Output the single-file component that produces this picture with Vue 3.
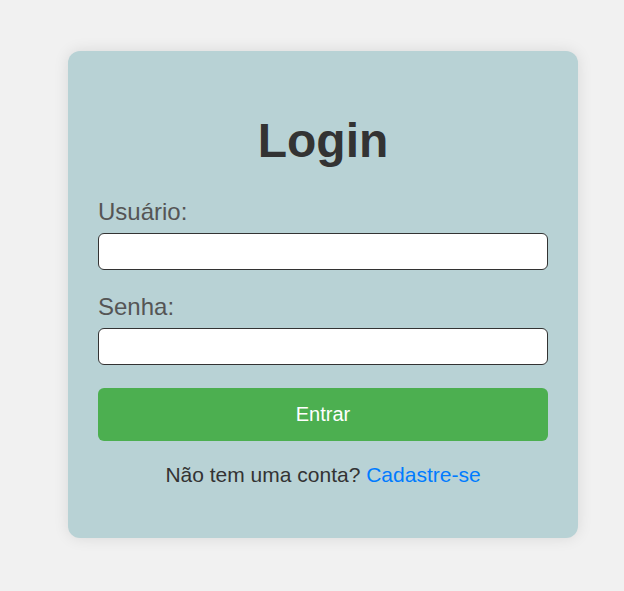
<script setup>
import { ref } from 'vue'

const user = ref('')
const password = ref('')
</script>

<template>
  <main class="page">
    <form class="card" @submit.prevent>
      <h1 class="title">Login</h1>
      <div class="field">
        <label for="user">Usuário:</label>
        <input id="user" v-model="user" type="text" />
      </div>
      <div class="field">
        <label for="password">Senha:</label>
        <input id="password" v-model="password" type="password" />
      </div>
      <button class="submit" type="submit">Entrar</button>
      <p class="signup">Não tem uma conta? <a href="#">Cadastre-se</a></p>
    </form>
  </main>
</template>

<style>
body {
  margin: 0;
  background: #f1f1f1;
}
</style>

<style scoped>
.page {
  display: flex;
  justify-content: center;
  box-sizing: border-box;
  padding: 51px 46px 53px 68px;
  font-family: Arial, "Liberation Sans", sans-serif;
}

.card {
  box-sizing: border-box;
  width: 100%;
  max-width: 510px;
  padding: 62px 30px 50px;
  border-radius: 12px;
  background: #b8d2d5;
  box-shadow: 0 0 15px rgba(0, 0, 0, 0.1);
}

.title {
  margin: 0 0 29px;
  color: #333;
  font-size: 48px;
  line-height: 56px;
  text-align: center;
}

.field {
  display: flex;
  flex-direction: column;
  gap: 7px;
  margin-bottom: 23px;
}

.field label {
  color: #555;
  font-size: 24px;
  line-height: 28px;
}

.field input {
  box-sizing: border-box;
  width: 100%;
  height: 37px;
  padding: 8px;
  border: 1px solid #333;
  border-radius: 6px;
  background: #fff;
  font: inherit;
  font-size: 16px;
}

.submit {
  display: block;
  width: 100%;
  height: 53px;
  padding: 0;
  border: 0;
  border-radius: 6px;
  background: #4caf50;
  color: #fff;
  font: inherit;
  font-size: 20px;
  cursor: pointer;
}

.signup {
  margin: 21px 0 0;
  color: #333;
  font-size: 21px;
  line-height: 26px;
  text-align: center;
}

.signup a {
  color: #007bff;
  text-decoration: none;
}
</style>
